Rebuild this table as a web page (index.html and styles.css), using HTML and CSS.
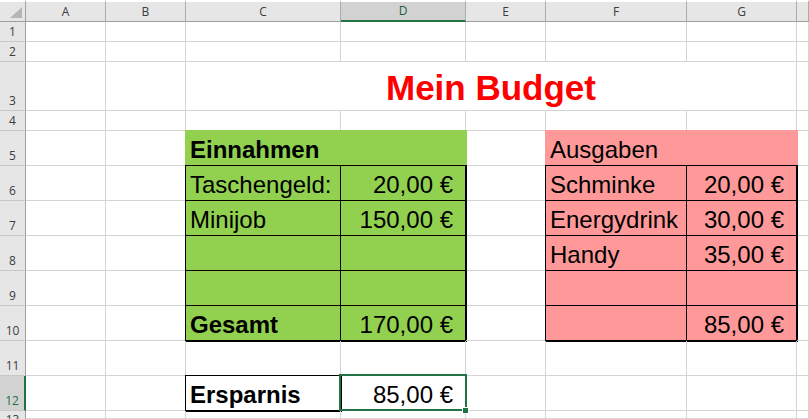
FILE: index.html
```html
<!DOCTYPE html>
<html lang="de">
<head>
<meta charset="utf-8">
<title>Mein Budget</title>
<link rel="stylesheet" href="styles.css">
</head>
<body>
<div class="sheet">
  <div class="corner"><svg width="12" height="11" viewBox="0 0 12 11"><polygon points="12,0 12,11 0,11" fill="#b5b5b5"/></svg></div>
  <div class="ch">A</div><div class="ch">B</div><div class="ch">C</div><div class="ch sel">D</div><div class="ch">E</div><div class="ch">F</div><div class="ch">G</div><div class="ch"></div>

  <div class="rh">1</div><div class="c"></div><div class="c"></div><div class="c"></div><div class="c"></div><div class="c"></div><div class="c"></div><div class="c"></div><div class="c"></div>
  <div class="rh">2</div><div class="c"></div><div class="c"></div><div class="c"></div><div class="c"></div><div class="c"></div><div class="c"></div><div class="c"></div><div class="c"></div>
  <div class="rh">3</div><div class="c"></div><div class="c"></div><div class="c title">Mein Budget</div><div class="c"></div>
  <div class="rh">4</div><div class="c"></div><div class="c"></div><div class="c"></div><div class="c"></div><div class="c"></div><div class="c"></div><div class="c"></div><div class="c"></div>

  <div class="rh">5</div><div class="c"></div><div class="c"></div>
  <div class="c g b">Einnahmen</div><div class="c g"></div>
  <div class="c"></div>
  <div class="c p">Ausgaben</div><div class="c p"></div>
  <div class="c"></div>

  <div class="rh">6</div><div class="c"></div><div class="c"></div>
  <div class="c g bx">Taschengeld:</div><div class="c g bx num">20,00 €</div>
  <div class="c"></div>
  <div class="c p bx">Schminke</div><div class="c p bx num">20,00 €</div>
  <div class="c"></div>

  <div class="rh">7</div><div class="c"></div><div class="c"></div>
  <div class="c g bx">Minijob</div><div class="c g bx num">150,00 €</div>
  <div class="c"></div>
  <div class="c p bx">Energydrink</div><div class="c p bx num">30,00 €</div>
  <div class="c"></div>

  <div class="rh">8</div><div class="c"></div><div class="c"></div>
  <div class="c g bx"></div><div class="c g bx num"></div>
  <div class="c"></div>
  <div class="c p bx">Handy</div><div class="c p bx num">35,00 €</div>
  <div class="c"></div>

  <div class="rh">9</div><div class="c"></div><div class="c"></div>
  <div class="c g bx"></div><div class="c g bx num"></div>
  <div class="c"></div>
  <div class="c p bx"></div><div class="c p bx num"></div>
  <div class="c"></div>

  <div class="rh">10</div><div class="c"></div><div class="c"></div>
  <div class="c g bx b">Gesamt</div><div class="c g bx num">170,00 €</div>
  <div class="c"></div>
  <div class="c p bx"></div><div class="c p bx num">85,00 €</div>
  <div class="c"></div>

  <div class="rh">11</div><div class="c"></div><div class="c"></div><div class="c"></div><div class="c"></div><div class="c"></div><div class="c"></div><div class="c"></div><div class="c"></div>

  <div class="rh rsel">12</div><div class="c"></div><div class="c"></div>
  <div class="c bx b">Ersparnis</div>
  <div class="c num active">85,00 €<span class="selbox"></span><span class="handle"></span></div>
  <div class="c"></div><div class="c"></div><div class="c"></div><div class="c"></div>

  <div class="rh last">13</div><div class="c"></div><div class="c"></div><div class="c"></div><div class="c"></div><div class="c"></div><div class="c"></div><div class="c"></div><div class="c"></div>
</div>
</body>
</html>
```

FILE: styles.css
```css
* { box-sizing: border-box; }
html, body { margin: 0; padding: 0; background: #fff; overflow: hidden; }

.sheet {
  display: grid;
  grid-template-columns: 26px 80px 80px 155px 125px 80px 141px 110px 12px;
  grid-template-rows: 22px 20px 20px 49px 20px repeat(8, 35px) 8px;
  width: 809px;
  height: 419px;
  overflow: hidden;
  font-family: "Liberation Sans", Arial, sans-serif;
  font-size: 24px;
  color: #000;
}

.corner {
  background: #e6e6e6;
  border-top: 2px solid #fff;
  border-right: 1px solid #a0a0a0;
  border-bottom: 1px solid #9e9e9e;
  display: flex;
  align-items: flex-end;
  justify-content: flex-end;
  padding: 0 3px 3px 0;
}
.corner svg { display: block; }

.ch {
  background: #e6e6e6;
  border-top: 2px solid #fff;
  border-right: 1px solid #ababab;
  border-bottom: 1px solid #9e9e9e;
  display: flex;
  align-items: center;
  justify-content: center;
  font-family: "Open Sans", "Noto Sans", sans-serif;
  font-size: 12px;
  line-height: 12px;
  color: #3c3c3c;
}
.ch.sel {
  background: #d2d2d2;
  border-bottom: 2px solid #217346;
  color: #1f5c3a;
}

.rh {
  overflow: hidden;
  background: #e6e6e6;
  border-right: 1px solid #a0a0a0;
  border-bottom: 1px solid #c8c8c8;
  display: flex;
  align-items: flex-end;
  justify-content: center;
  padding-bottom: 3px;
  font-family: "Open Sans", "Noto Sans", sans-serif;
  font-size: 12px;
  line-height: 12px;
  color: #3c3c3c;
}
.rh.rsel {
  background: #d2d2d2;
  border-right: 2px solid #217346;
  color: #217346;
}
.rh.last {
  align-items: flex-start;
  padding: 3px 0 0 0;
  border-bottom: 0;
}

.c {
  position: relative;
  border-right: 1px solid #d4d4d4;
  border-bottom: 1px solid #d4d4d4;
  display: flex;
  align-items: flex-end;
  padding: 0 4px 3px 4px;
  line-height: 24px;
  white-space: nowrap;
}
.num { justify-content: flex-end; padding-right: 12px; }
.b { font-weight: bold; }

.title {
  grid-column: span 5;
  justify-content: center;
  color: #ff0000;
  font-weight: bold;
  font-size: 35px;
  line-height: 35px;
  padding-bottom: 5px;
}

.g { background: #92d050; border-color: #92d050; box-shadow: 0 0 0 1px #92d050; }
.p { background: #ff9999; border-color: #ff9999; box-shadow: 0 0 0 1px #ff9999; }
.bx { border-color: #000; box-shadow: 0 0 0 1px #000; }

.selbox {
  position: absolute;
  left: -2px;
  top: -2px;
  right: -2px;
  bottom: -1px;
  border: 2px solid #217346;
  z-index: 2;
}
.handle {
  position: absolute;
  left: 121px;
  top: 31px;
  width: 7px;
  height: 7px;
  background: #217346;
  border: 1px solid #fff;
  z-index: 3;
}
```
